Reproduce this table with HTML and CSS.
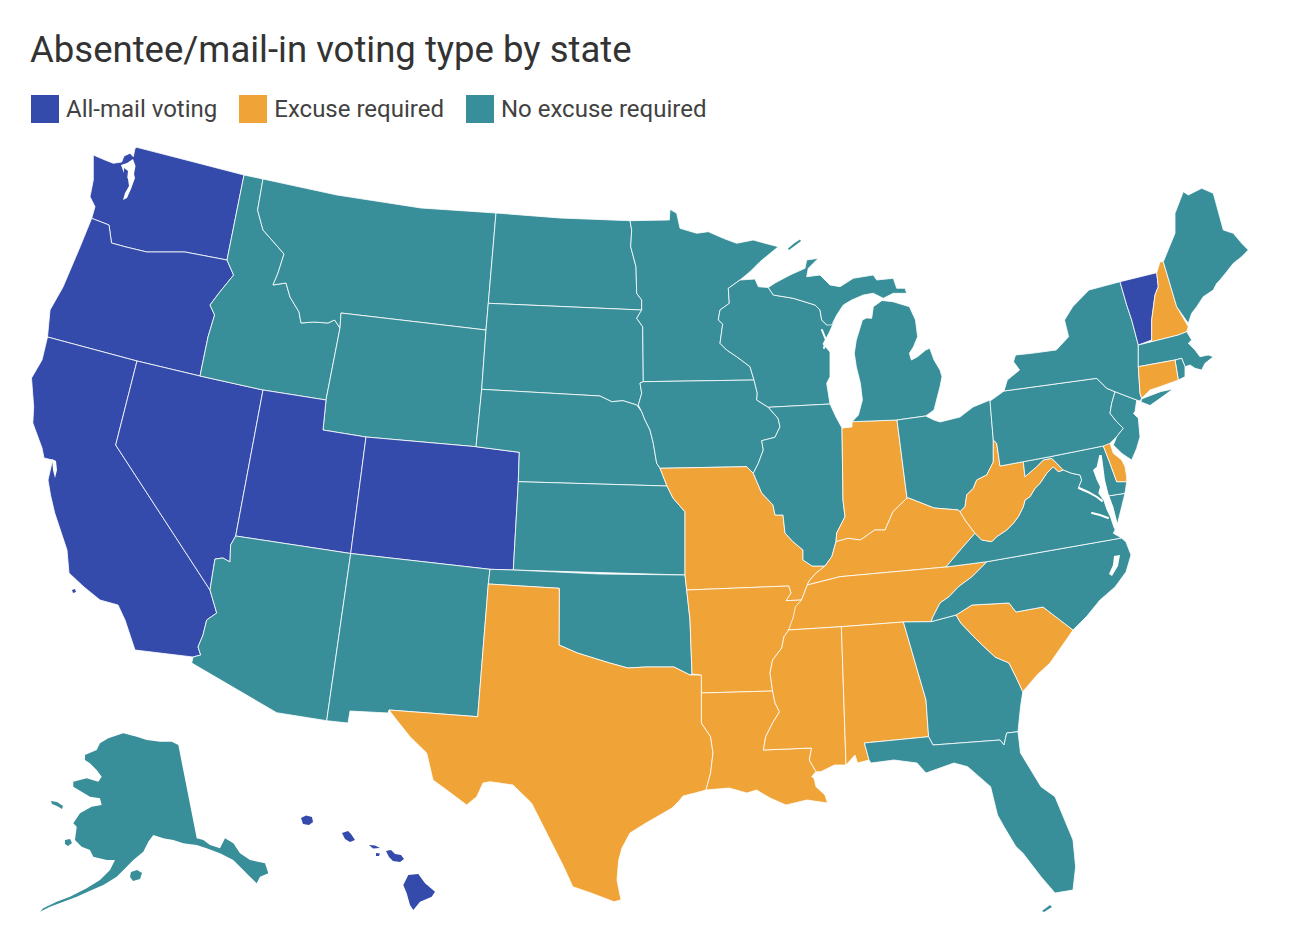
FILE: index.html
```html
<!DOCTYPE html>
<html lang="en">
<head>
<meta charset="utf-8">
<title>Absentee/mail-in voting type by state</title>
<link rel="stylesheet" href="styles.css">
</head>
<body>
<header class="head">
  <h1 class="title">Absentee/mail-in voting type by state</h1>
  <ul class="legend">
    <li class="item"><span class="swatch sw-blue"></span>All-mail voting</li>
    <li class="item"><span class="swatch sw-orange"></span>Excuse required</li>
    <li class="item"><span class="swatch sw-teal"></span>No excuse required</li>
  </ul>
</header>
<svg class="map" viewBox="0 140 1310 804" width="1310" height="804" xmlns="http://www.w3.org/2000/svg">
  <g class="states">
    <!-- West -->
    <polygon class="blue" points="93.3,155 105,160 113.3,163.3 121.7,162 124,156 130,153.3 133.3,156.7 135,148.3 136.8,147.3 190,161 244,175 227,260 185,252 147,252 126,247 111.5,243 109,225 91.7,218.3 95,206.7 90,196.7 93.3,180"/>
    <polygon class="blue" points="91.7,218.3 109,225 111.5,243 126,247 147,252 185,252 227,260 233.6,275 219,293 210,305 214.6,315 208,337 200,376 137,361 47.5,337 50,310 63,287 80,247"/>
    <polygon class="blue" points="47.5,337 137,361 115.7,445 210,590 216.7,613 206.7,620 203,635 198,647 200.7,655 193,657 135,650 125,620 118,605 100,600 84,587 69,573 67,550 54.7,513 50.5,495 48,480 52.6,460 44,458 42,448 32.8,423 33.7,407 31.5,378 42,360"/>
    <polygon class="blue" points="137,361 200,376 263,390 235.7,536 230.6,545 230,562 223,558 215,559 212.7,573 210,590 115.7,445"/>
    <polygon class="teal" points="244,175 263,179 257.6,210 263,230 278,247 284,254 278,273 273,285 286,283 290,297 299,312 301,323 313.5,322 328,323 334.6,320 340,328 326,400 263,390 200,376 208,337 214.6,315 210,305 219,293 233.6,275 227,260"/>
    <polygon class="teal" points="263,179 337,195 421,208 496,213 488.3,303.3 486,330 341,313 340,328 334.6,320 328,323 313.5,322 301,323 299,312 290,297 286,283 273,285 278,273 284,254 278,247 263,230 257.6,210"/>
    <polygon class="teal" points="341,313 486,330 481.7,389.3 476,446.7 366,437 323,430 326,400 340,328"/>
    <polygon class="blue" points="263,390 326,400 323,430 366,437 350.7,553.5 235.7,536"/>
    <polygon class="blue" points="366,437 476,446.7 519.3,452.3 518.3,481.7 513.3,570 490,569.3 350.7,553.5"/>
    <polygon class="teal" points="235.7,536 350.7,553.5 326.7,720.7 276.7,712.7 191.7,663 193,657 200.7,655 198,647 203,635 206.7,620 216.7,613 210,590 212.7,573 215,559 223,558 230,562 230.6,545"/>
    <polygon class="teal" points="350.7,553.5 490,569.3 488.3,584 477.7,716.7 389,710 388,713 350,711 348,723 326.7,720.7"/>
    <!-- Plains -->
    <polygon class="teal" points="496,213 560,218 630,220.7 631.7,230 630.7,246.7 636,266.7 636.7,293.3 641.7,300 641.7,310 488.3,303.3"/>
    <polygon class="teal" points="488.3,303.3 641.7,310 636.7,318.3 642.7,326.7 643.3,381.7 640,383 641.7,393.3 638.3,405 641.7,411.7 636.7,405 623,400.7 611.7,401.7 600,396 481.7,389.3 486,330"/>
    <polygon class="teal" points="481.7,389.3 600,396 611.7,401.7 623,400.7 636.7,405 641.7,411.7 645,420 650,430 653.3,443.3 656.7,463.3 660,468.3 667,486 518.3,481.7 519.3,452.3 476,446.7"/>
    <polygon class="teal" points="518.3,481.7 667,486 673,498 681.7,508 685,511.7 685,575 513.3,570"/>
    <polygon class="teal" points="490,569.3 513.3,570 600,574 685,575 686.7,590 690,620 692,674 690,675 674,667 646,667 628,668 609.6,663 577.4,653 559,645 559.3,588.3 488.3,584"/>
    <polygon class="orange" points="488.3,584 559.3,588.3 559,645 577.4,653 609.6,663 628,668 646,667 674,667 690,675 701.4,675 701.4,693 701.4,723 710.6,736.7 713,753 710.6,773 706,790 695,793 683,796 679,801 672,808 660,815 646,823 630,833 622,848 618.7,860 617,880 621,900 614,901.7 591,893 572.8,886.7 563.7,866.7 531.5,803 513,785 490,781.7 483,783 476.7,796.7 466.7,805 446.7,790 433,780 426.7,753 410,736.7 396.7,720 389,710 477.7,716.7"/>
    <!-- Midwest -->
    <polygon class="teal" points="630,220.7 669.3,220 670,209.3 676.7,213.3 680,228.3 696.7,233.3 708.3,231.7 723.3,238.3 736.7,243.3 753.3,240 765,243.3 778.3,246.7 760,261.7 750,271.7 740,280 733,285 728.3,288.3 729.3,303.3 720,310 718.3,320 722.7,324 720,343.3 726.7,350 736.7,356.7 750,366.7 754,380 643.3,381.7 642.7,326.7 636.7,318.3 641.7,310 641.7,300 636.7,293.3 636,266.7 630.7,246.7 631.7,230"/>
    <polygon class="teal" points="643.3,381.7 754,380 757.3,393.3 756.7,400 768.3,407.3 778,418.3 780,426.7 775,437.3 761.7,440.7 763.3,450 758.3,463.3 753.3,473.3 746.7,466.7 660,468.3 656.7,463.3 653.3,443.3 650,430 645,420 641.7,411.7 638.3,405 641.7,393.3 640,383"/>
    <polygon class="orange" points="660,468.3 746.7,466.7 753.3,473.3 761.7,493 773,505 775,515 783,515 785,533 793,541.7 803,550 803,560 812,566 825,566 815,574 809,581 807.3,585 801.5,600 786,600.7 791,593 788.6,586 686.7,590 685,575 685,511.7 681.7,508 673,498 667,486"/>
    <polygon class="teal" points="733,285 740,280 755,279 758.3,286.7 768.3,287.5 773.3,295 793.3,298.3 815,305 820,310 821.7,320 826.7,325 834,322 829,333 823,344 830,352 830,376.7 826.7,383.3 830,404 768.3,407.3 756.7,400 757.3,393.3 754,380 750,366.7 736.7,356.7 726.7,350 720,343.3 722.7,324 718.3,320 720,310 729.3,303.3 728.3,288.3"/>
    <polygon class="teal" points="768.3,407.3 830,404 836,417 842,428 843,500 845,516.7 836.7,533 836,541.7 831.8,556.7 825,566 812,566 803,560 803,550 793,541.7 785,533 783,515 775,515 773,505 761.7,493 753.3,473.3 758.3,463.3 763.3,450 761.7,440.7 775,437.3 780,426.7 778,418.3"/>
    <polygon class="orange" points="842,428 852,427 852,421.7 897,420 907,498 893,511.7 885,530 874.7,530 860.4,540 848,538.3 836,541.7 836.7,533 845,516.7 843,500"/>
    <polygon class="teal" points="768.3,287.5 775,283 790,275 805,268.3 806.7,260 818.3,258.3 808.3,268.3 806.7,276.7 820,275 830,285 840,286.7 853.3,278.3 873.3,275 876.7,280 893.3,278.3 896.7,288.3 905,288.3 906.7,293.3 893.3,293.3 883.3,298.3 873.3,293.3 863.3,295 851.7,300 843.3,305 836.7,315 831.7,325 826.7,325 821.7,320 820,310 815,305 793.3,298.3 773.3,295"/>
    <polygon class="teal" points="852,421.7 897,420 925.7,416 934,410 940,386.7 942,376.7 940,370 934,360 929.8,348.3 925.7,350 917.6,356.7 911.4,360 909.4,353.3 913.5,346.7 917.6,336.7 915.5,320 909.4,306.7 893,301.7 882,300.5 873.3,306.7 871.7,318.3 866.5,318 862.4,320 860.4,326.7 856.3,340 854.3,353.3 856.3,366.7 860.4,383.3 862.4,400 858.4,415"/>
    <polygon class="teal" points="897,420 925.7,416 934,420 940,422 960,417 973,407 990,400 993.3,440 993.3,462 986.7,475 976.7,480 973.3,488.3 966.7,495 965,506.7 960,511.7 958.4,510 934,508 909.4,498.3 907,498"/>
    <polygon class="orange" points="807.3,585 840,576.7 946,567 962,548 975,533.3 965,520 960,511.7 958.4,510 934,508 909.4,498.3 907,498 893,511.7 885,530 874.7,530 860.4,540 848,538.3 836,541.7 831.8,556.7 825,566 815,574 809,581"/>
    <!-- South -->
    <polygon class="orange" points="686.7,590 788.6,586 791,593 786,600.7 801.5,600 795.5,611.7 791,626.7 784,636.7 781.7,648 772.6,660 770,673 772.6,691 701.4,693 701.4,675 692,674 690,620"/>
    <polygon class="orange" points="701.4,693 772.6,691 775,703 779.5,711.7 772.6,723 765.7,736.7 763.4,750 811.6,748 809.3,760 816,771.7 811.6,776.7 814,778 816,786.7 825,795 827.6,803 807,800 786,805 770,798 756.5,790 747,793 729,788 706,790 710.6,773 713,753 710.6,736.7 701.4,723"/>
    <polygon class="orange" points="807.3,585 840,576.7 946,567 987,561.7 972,576.7 958.5,586.7 949,596.7 940,603 933,616.7 931,621.7 903.4,622 841.4,626.7 788.6,630 793,618 795.5,606.7 801.5,600"/>
    <polygon class="orange" points="788.6,630 841.4,626.7 846,765 834.5,765 820.8,771.7 816,771.7 809.3,760 811.6,748 763.4,750 765.7,736.7 772.6,723 779.5,711.7 775,703 772.6,691 770,673 772.6,660 781.7,648 784,636.7"/>
    <polygon class="orange" points="841.4,626.7 903.4,622 926,700 928.6,736.7 864.4,743 869,760 857.5,763 855,755 846,765"/>
    <polygon class="teal" points="903.4,622 931,621.7 956,615 960.8,623 977,640 995,657 1009,663 1016,677 1022.8,691.7 1020.5,706.7 1018,731.7 1006.7,733 1004,745 1000,740 933,745 928.6,736.7 926,700"/>
    <polygon class="teal" points="864.4,743 928.6,736.7 933,745 1000,740 1004,745 1006.7,733 1018,731.7 1020.5,753 1041,786.7 1055,796.7 1073,840 1075.6,866.7 1073,890 1055,893 1041,876.7 1022.8,853 1016,846.7 1004,826.7 997.5,815 990.6,786.7 967.7,766.7 954,763 926,773 917,763 894,760 871,763 869,760"/>
    <polygon class="orange" points="956,615 972,605 1009,603 1016,612 1043,607 1073,630 1064,643 1050,663 1037,675 1022.8,691.7 1016,677 1009,663 995,657 977,640 960.8,623"/>
    <polygon class="teal" points="987,561.7 1121.6,538 1126,542 1131,555 1126,572 1115,587 1100,600 1087,616 1073,630 1043,607 1016,612 1009,603 972,605 956,615 931,621.7 933,616.7 940,603 949,596.7 958.5,586.7 972,576.7"/>
    <polygon class="teal" points="946,567 962,548 975,533.3 981.7,540 991.7,541.7 996.7,536.7 1006.7,530 1013.3,523.3 1018.3,516.7 1023.3,506.7 1025,500 1030,496.7 1035,488.3 1040,483.3 1046.7,473.3 1053.3,466.7 1058.3,471.7 1063.3,470 1071.7,473.3 1080,475 1081.7,480 1078.3,488.3 1086.7,491.7 1096.7,496.7 1100,500 1108,496 1125,493.3 1121.7,506.7 1116.7,526.7 1113.3,533.3 1121.6,538 987,561.7"/>
    <polygon class="orange" points="993.3,440 996.7,443.3 1000,466 1023.3,461.7 1025,476.7 1036.7,466.7 1043.3,460 1051.7,458.3 1056.7,463.3 1063.3,470 1058.3,471.7 1053.3,466.7 1046.7,473.3 1040,483.3 1035,488.3 1030,496.7 1025,500 1023.3,506.7 1018.3,516.7 1013.3,523.3 1006.7,530 996.7,536.7 991.7,541.7 981.7,540 975,533.3 965,520 960,511.7 965,506.7 966.7,495 973.3,488.3 976.7,480 986.7,475 993.3,462"/>
    <polygon class="teal" points="1023.3,461.7 1050,456.7 1103.3,446 1110,463.3 1116.7,481.7 1126.7,481.7 1125,493.3 1108,496 1100,500 1096.7,496.7 1086.7,491.7 1078.3,488.3 1081.7,480 1080,475 1071.7,473.3 1063.3,470 1056.7,463.3 1051.7,458.3 1043.3,460 1036.7,466.7 1025,476.7"/>
    <polygon class="orange" points="1103.3,446 1106.7,443.3 1110,443.3 1113.3,453.3 1121.7,460 1125,466.7 1126.7,476.7 1126.7,481.7 1116.7,481.7 1110,463.3"/>
    <!-- Northeast -->
    <polygon class="teal" points="990,401 1004,391 1096.7,378.3 1106.7,388.3 1115,391.7 1111.7,403.3 1110,413.3 1116.7,421.7 1123.3,428.3 1116.7,436.7 1110,443.3 1103.3,446 1050,456.7 1023.3,461.7 1000,466 996.7,443.3 993.3,440"/>
    <polygon class="teal" points="1115,391.7 1136.7,400 1135,411.7 1133.3,413.3 1138.3,418.3 1140,436.7 1136.7,448.3 1131.7,460 1126.7,456.7 1121.7,453.3 1113.3,445 1116.7,436.7 1123.3,428.3 1116.7,421.7 1110,413.3 1111.7,403.3"/>
    <polygon class="teal" points="1004,391 1007.3,380 1019.6,370 1013.5,361.7 1015.5,355 1031.8,353.3 1056.3,350 1068.6,336.7 1064.5,320 1072.7,306.7 1089,290 1120,281.7 1126.7,305 1131.7,320 1138.3,345 1138.3,366.7 1140,393.3 1141.7,398.3 1140,401 1136.7,400 1115,391.7 1106.7,388.3 1096.7,378.3"/>
    <polygon class="teal" points="1141,402 1150,405.5 1162,397 1173,389 1161,391.5 1149,396 1141.5,399"/>
    <polygon class="blue" points="1120,281.7 1156.7,272.7 1158.3,286.7 1155,295 1151.7,320 1151.7,340 1138.3,345 1131.7,320 1126.7,305"/>
    <polygon class="orange" points="1156.7,272.7 1160,261.7 1163.3,261.7 1176.7,306.7 1188.3,326.7 1186.7,331.7 1178.3,335 1151.7,341.7 1151.7,320 1155,295 1158.3,286.7"/>
    <polygon class="teal" points="1163.3,261.7 1175,233.3 1175,213.3 1183.3,191.7 1188.3,195 1201.7,188.3 1213.3,193.3 1223.3,230 1233.3,233.3 1241.7,243.3 1248.3,250 1241.7,256.7 1233.3,263.3 1226.7,271.7 1220,280 1216.7,283.3 1213.3,290 1203.3,296.7 1196.7,306.7 1191.7,313.3 1188.3,323.3 1176.7,306.7"/>
    <polygon class="teal" points="1138.3,345 1151.7,341.7 1178.3,335 1186.7,331.7 1191.7,340 1188.3,343.3 1195,350 1200,356.7 1208.3,355 1213.3,356.7 1205,363.3 1201.7,370 1195,368.3 1190,365 1185,366.7 1181.7,358.3 1175,360 1138.3,366.7"/>
    <polygon class="teal" points="1175,360 1181.7,358.3 1185,366.7 1185,376.7 1178.3,380"/>
    <polygon class="orange" points="1138.3,366.7 1175,360 1178.3,380 1160,386.7 1150,390 1141.7,398.3 1140,393.3"/>
  </g>
  <g class="water">
    <polygon points="121,165 127,163 133,159 135.5,166 134,174 135,178 131,189 127,198 123,200 125,193 129,186 128,179 124,173"/>
    <polygon class="blue" points="124,168 128,171 127,180 124,178"/>
    <polygon points="52,459 56,461 57,470 55,478 53,470"/>
    <polygon points="1099.3,455 1101.7,455 1103.3,466.7 1105,480 1108.3,493.3 1113.3,506.7 1116.7,520 1120,535 1116.7,533.3 1113.3,526.7 1110,516.7 1106.7,510 1103.3,500 1098.3,493.3 1100,486.7 1096.7,480 1093,470 1096.7,466.7"/>
    <polygon points="1114,556 1120,555 1118,566 1112,576 1109,574 1113,565"/>
    <polyline class="river" points="1079,488 1088,492 1097,497 1102,501"/>
    <polyline class="river" points="1092,513 1100,515 1108,518"/>
    <polyline class="river" points="822,330 826,340 824,348"/>
  </g>
  <g class="islands">
    <polygon class="teal" points="788,248.5 794,243.5 800,239.5 801,241 795,245.5 789,250"/>
    <polygon class="teal" points="85,755 96.7,750 100,743.3 108.3,738.3 123.3,733.3 136.7,736.7 146.7,740 160,741.7 171.7,741.7 178.3,745 196.7,838.3 203.3,840 210,845 220,848.3 225,838.3 233.3,843.3 240,853.3 250,860 265,863.3 268.3,873.3 260,876.7 256.7,883.3 250,876.7 243.3,870 233.3,860 220,853.3 206.7,848.3 196.7,845 183.3,843.3 173.3,840 163.3,838.3 153.3,835 148.3,841.7 143.3,851.7 133.3,860 126.7,866.7 116.7,876.7 103.3,885 91.7,890 76.7,896.7 63.3,901.7 50,906.7 40,911.7 43.3,908.3 56.7,901.7 70,896.7 86.7,888.3 100,880 110,870 115,860 106.7,860 93.3,856.7 90,850 81.7,846.7 75,840 76.7,826.7 73.3,823.3 80,813.3 91.7,806.7 101.7,805 100,798.3 90,796.7 81.7,791.7 73.3,786.7 73.3,781.7 86.7,778.3 98.3,781.7 101.7,776.7 96.7,770 90,763.3 85,760"/>
    <polygon class="teal" points="51,801 57,802 63,806 62,809 57,806 52,804"/>
    <polygon class="teal" points="65,840 70,839 72,843 68,846 65,844"/>
    <polygon class="teal" points="131,872 137,870 142,873 140,879 133,881 130,877"/>
    <polygon class="blue" points="301,818 306,815.5 312,817 313,822 309,825 303,824"/>
    <polygon class="blue" points="342,833 348,831 351,834 355,840 350,842 345,839"/>
    <polygon class="blue" points="369,845 375,845.5 380,848 373,848.5"/>
    <polygon class="blue" points="376,853 380,853.5 379,856 376,856"/>
    <polygon class="blue" points="386,851 391,850 395,854 401,855 404,859 400,862 393,861 389,857"/>
    <polygon class="blue" points="408.3,875 418.3,874 425,883.3 435,891.7 431.7,896.7 420,901.7 413.3,910 410,905 406.7,893.3 403.3,885"/>
    <polygon class="blue" points="72,590 75,589 76,592 73,593"/>
    <polygon class="teal" points="1042,911 1050,905 1052,907 1044,912"/>
  </g>
</svg>
</body>
</html>
```
FILE: styles.css
```css
html, body {
  margin: 0;
  padding: 0;
  background: #ffffff;
}

body {
  width: 1310px;
  height: 944px;
  overflow: hidden;
  font-family: Roboto, "Liberation Sans", Arial, sans-serif;
}

.head {
  height: 140px;
  box-sizing: border-box;
  padding: 30px 0 0 30px;
}

.title {
  margin: 0;
  font-size: 36.5px;
  font-weight: 400;
  line-height: 40px;
  color: #333333;
}

.legend {
  list-style: none;
  margin: 25px 0 0 1px;
  padding: 0;
  display: flex;
  gap: 22px;
}

.item {
  display: flex;
  align-items: center;
  font-size: 24px;
  line-height: 28px;
  color: #424242;
}

.swatch {
  width: 28px;
  height: 28px;
  margin-right: 7px;
}

.sw-blue { background: #344bab; }
.sw-orange { background: #f0a337; }
.sw-teal { background: #388e99; }

.map {
  display: block;
}

.states polygon {
  stroke: #ffffff;
  stroke-width: 1;
  stroke-opacity: 0.8;
  stroke-linejoin: round;
}

.blue { fill: #344bab; }
.orange { fill: #f0a337; }
.teal { fill: #388e99; }

.water polygon {
  fill: #ffffff;
}

.water polygon.blue {
  fill: #344bab;
}

.water .river {
  fill: none;
  stroke: #ffffff;
  stroke-width: 2;
  stroke-linecap: round;
}

.islands polygon {
  stroke: none;
}
```
